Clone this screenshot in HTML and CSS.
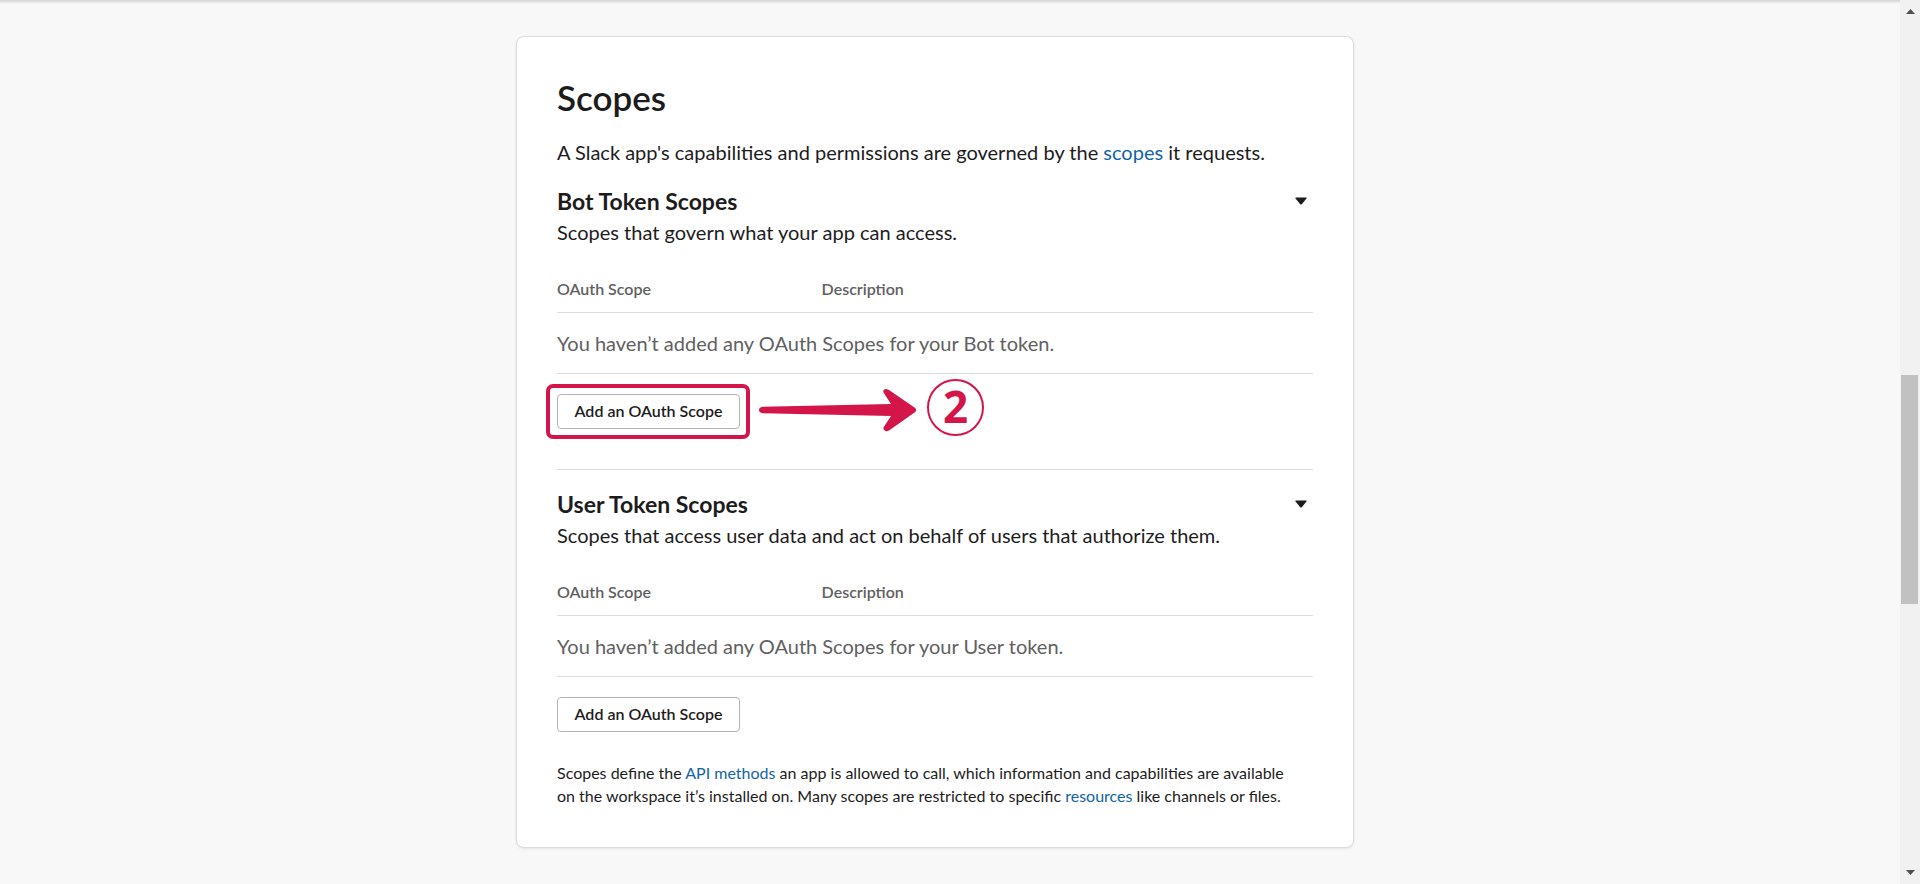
FILE: index.html
```html
<!DOCTYPE html>
<html lang="en">
<head>
<meta charset="utf-8">
<title>OAuth &amp; Permissions - Scopes</title>
<link rel="stylesheet" href="styles.css">
</head>
<body>
<div class="viewport">
  <main class="page">
    <section class="card">
      <h2 class="card-title">Scopes</h2>
      <p class="lead">A Slack app's capabilities and permissions are governed by the <a href="#scopes">scopes</a> it requests.</p>

      <section class="token">
        <header class="token-head">
          <h3 class="token-title">Bot Token Scopes</h3>
          <button class="toggle" type="button" aria-label="Collapse Bot Token Scopes"><svg width="12" height="8" viewBox="0 0 12 8"><path d="M1 .5h10q1.300 0 .5 1.100L7 7Q6 8 5 7L.5 1.600Q-.3.5 1 .5z"/></svg></button>
        </header>
        <p class="token-text">Scopes that govern what your app can access.</p>
        <table class="scopes">
          <thead><tr><th class="col-scope">OAuth Scope</th><th>Description</th></tr></thead>
          <tbody><tr><td colspan="2">You haven’t added any OAuth Scopes for your Bot token.</td></tr></tbody>
        </table>
        <div class="action">
          <button class="add" type="button">Add an OAuth Scope</button>
          <div class="callout">
            <span class="callout-frame"></span>
            <svg class="callout-arrow" width="158" height="44" viewBox="0 0 158 44"><path d="M3.500 18.800 L132 16 L124.500 4.500 Q123.500 1 127.500 1 L130 2 L155.500 19.500 Q159 22 155.500 24.500 L130 42.500 Q127 44 125 42 Q124 40.500 124.800 39 L132 28 L3.500 25.200 Q0 24.500 0 22 Q0 19.500 3.500 18.800z"/></svg>
            <span class="callout-step">2</span>
          </div>
        </div>
      </section>

      <section class="token token-next">
        <header class="token-head">
          <h3 class="token-title">User Token Scopes</h3>
          <button class="toggle" type="button" aria-label="Collapse User Token Scopes"><svg width="12" height="8" viewBox="0 0 12 8"><path d="M1 .5h10q1.300 0 .5 1.100L7 7Q6 8 5 7L.5 1.600Q-.3.5 1 .5z"/></svg></button>
        </header>
        <p class="token-text">Scopes that access user data and act on behalf of users that authorize them.</p>
        <table class="scopes">
          <thead><tr><th class="col-scope">OAuth Scope</th><th>Description</th></tr></thead>
          <tbody><tr><td colspan="2">You haven’t added any OAuth Scopes for your User token.</td></tr></tbody>
        </table>
        <div class="action">
          <button class="add" type="button">Add an OAuth Scope</button>
        </div>
      </section>

      <p class="note">Scopes define the <a href="#methods">API methods</a> an app is allowed to call, which information and capabilities are available on the workspace it’s installed on. Many scopes are restricted to specific <a href="#resources">resources</a> like channels or files.</p>
    </section>
  </main>
  <div class="scrollbar">
    <button class="scroll-btn" type="button" aria-label="Scroll up"><svg width="9" height="5" viewBox="0 0 9 5"><path d="M4.500 0 9 5H0z"/></svg></button>
    <div class="scroll-track"><div class="scroll-thumb"></div></div>
    <button class="scroll-btn" type="button" aria-label="Scroll down"><svg width="9" height="5" viewBox="0 0 9 5"><path d="M0 0h9L4.500 5z"/></svg></button>
  </div>
</div>
</body>
</html>
```
FILE: styles.css
```css
* { box-sizing: border-box; }
body {
  margin: 0;
  background: #f8f8f8;
  color: #1d1c1d;
  font: 400 20px/30px Lato, "Liberation Sans", sans-serif;
}
h2, h3, p { margin: 0; }
a { color: #1264a3; text-decoration: none; }
button { font-family: inherit; cursor: pointer; }

.viewport { display: flex; min-height: 100vh; }
.page {
  flex: 1;
  padding: 36px 30px 36px 0;
  background: linear-gradient(#d4d4d4, #f8f8f8 4px);
}
.card {
  max-width: 838px;
  margin: 0 auto;
  padding: 39px 40px 40px;
  background: #fff;
  border: 1px solid #dcdcdc;
  border-radius: 8px;
  box-shadow: 0 1px 3px rgba(0, 0, 0, .08);
}
.card-title { font-size: 35px; line-height: 42px; font-weight: 600; }
.lead { margin-top: 19px; }

.token { margin-top: 18px; }
.token-next {
  margin-top: 40px;
  padding-top: 18px;
  border-top: 1px solid #ddd;
}
.token-head { display: flex; align-items: center; justify-content: space-between; }
.token-title { font-size: 23px; line-height: 32px; font-weight: 700; }
.toggle {
  display: flex;
  padding: 4px 6px;
  border: 0;
  background: none;
}
.toggle svg { fill: #1d1c1d; }

.scopes { width: 100%; margin-top: 20px; border-spacing: 0; }
.scopes th {
  padding: 10px 0 11px;
  border-bottom: 1px solid #ddd;
  color: #616061;
  font-size: 16px;
  line-height: 24px;
  font-weight: 600;
  text-align: left;
}
.scopes td {
  padding: 15px 0;
  border-bottom: 1px solid #ddd;
  color: #616061;
}
.col-scope { width: 35%; }

.action { position: relative; margin-top: 20px; display: flex; }
.add {
  min-width: 183px;
  height: 35px;
  padding: 0 15px 2px;
  background: #fff;
  border: 1px solid #b4b4b4;
  border-radius: 4px;
  color: #1d1c1d;
  font-size: 16px;
  font-weight: 600;
}

.callout {
  position: absolute;
  left: -11px;
  top: -18px;
  display: flex;
  align-items: center;
  pointer-events: none;
}
.callout-frame {
  width: 204px;
  height: 55px;
  margin-top: 8px;
  border: 4px solid #d3154a;
  border-radius: 7px;
}
.callout-arrow { margin: 5px 10px 0 9px; fill: #d3154a; }
.callout-step {
  width: 57px;
  height: 57px;
  border: 2px solid #d3154a;
  border-radius: 50%;
  color: #d3154a;
  font: 700 44px/51px "Open Sans", sans-serif;
  text-align: center;
}

.note { margin-top: 29px; padding-right: 16px; font-size: 16px; line-height: 23px; }

.scrollbar {
  width: 20px;
  display: flex;
  flex-direction: column;
  background: #f1f1f1;
}
.scroll-btn {
  height: 23px;
  display: flex;
  align-items: center;
  justify-content: center;
  padding: 0;
  border: 0;
  background: none;
}
.scroll-btn svg { fill: #505050; }
.scroll-track { flex: 1; display: flex; flex-direction: column; padding: 0 2px 0 1px; }
.scroll-track::before { content: ""; flex: 352; }
.scroll-track::after { content: ""; flex: 257; }
.scroll-thumb { flex: 229; background: #c1c1c1; }
```
